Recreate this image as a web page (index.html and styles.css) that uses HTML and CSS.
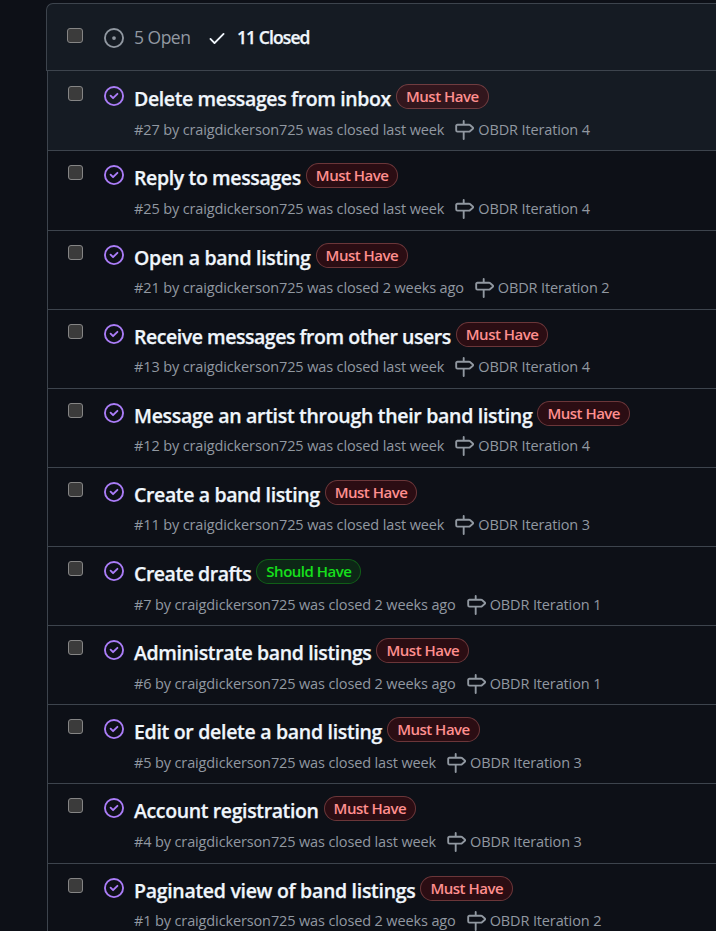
FILE: index.html
```html
<!DOCTYPE html>
<html lang="en">
<head>
<meta charset="utf-8">
<title>Issues</title>
<link rel="stylesheet" href="styles.css">
</head>
<body>
<svg class="sprite" aria-hidden="true">
  <symbol id="closed" viewBox="0 0 16 16"><path d="M11.28 6.78a.75.75 0 0 0-1.06-1.06L7.25 8.69 5.78 7.22a.75.75 0 0 0-1.06 1.06l2 2a.75.75 0 0 0 1.06 0l3.5-3.5Z"/><path d="M16 8A8 8 0 1 1 0 8a8 8 0 0 1 16 0Zm-1.5 0a6.5 6.5 0 1 0-13 0 6.5 6.5 0 0 0 13 0Z"/></symbol>
  <symbol id="open" viewBox="0 0 16 16"><path d="M8 9.5a1.5 1.5 0 1 0 0-3 1.5 1.5 0 0 0 0 3Z"/><path d="M8 0a8 8 0 1 1 0 16A8 8 0 0 1 8 0ZM1.5 8a6.5 6.5 0 1 0 13 0 6.5 6.5 0 0 0-13 0Z"/></symbol>
  <symbol id="check" viewBox="0 0 16 16"><path d="M13.78 4.22a.75.75 0 0 1 0 1.06l-7.25 7.25a.75.75 0 0 1-1.06 0L2.22 9.28a.75.75 0 0 1 1.06-1.06L6 10.94l6.72-6.72a.75.75 0 0 1 1.06 0Z"/></symbol>
  <symbol id="milestone" viewBox="0 0 16 16"><path d="M7.75 0a.75.75 0 0 1 .75.75V3h3.634c.414 0 .814.147 1.13.414l2.07 1.75a1.75 1.75 0 0 1 0 2.672l-2.07 1.75a1.75 1.75 0 0 1-1.13.414H8.5v5.25a.75.75 0 0 1-1.5 0V10H2.75A1.75 1.75 0 0 1 1 8.25v-3.5C1 3.784 1.784 3 2.75 3H7V.75A.75.75 0 0 1 7.75 0Zm4.384 8.5a.25.25 0 0 0 .161-.06l2.07-1.75a.248.248 0 0 0 0-.38l-2.07-1.75a.25.25 0 0 0-.161-.06H2.75a.25.25 0 0 0-.25.25v3.5c0 .138.112.25.25.25h9.384Z"/></symbol>
</svg>
<main class="box">
  <header class="head">
    <span class="checkbox"></span>
    <svg class="state"><use href="#open"/></svg>
    <span class="open-count">5 Open</span>
    <svg class="check"><use href="#check"/></svg>
    <span class="closed-count">11 Closed</span>
  </header>
  <div class="list">
    <div class="row active"><span class="checkbox"></span><svg class="state"><use href="#closed"/></svg><div class="body"><div class="line"><span class="title">Delete messages from inbox</span><span class="label must">Must Have</span></div><div class="meta"><span>#27 by craigdickerson725 was closed last week</span><svg><use href="#milestone"/></svg><span>OBDR Iteration 4</span></div></div></div>
    <div class="row"><span class="checkbox"></span><svg class="state"><use href="#closed"/></svg><div class="body"><div class="line"><span class="title">Reply to messages</span><span class="label must">Must Have</span></div><div class="meta"><span>#25 by craigdickerson725 was closed last week</span><svg><use href="#milestone"/></svg><span>OBDR Iteration 4</span></div></div></div>
    <div class="row"><span class="checkbox"></span><svg class="state"><use href="#closed"/></svg><div class="body"><div class="line"><span class="title loose">Open a band listing</span><span class="label must">Must Have</span></div><div class="meta"><span>#21 by craigdickerson725 was closed 2 weeks ago</span><svg><use href="#milestone"/></svg><span>OBDR Iteration 2</span></div></div></div>
    <div class="row"><span class="checkbox"></span><svg class="state"><use href="#closed"/></svg><div class="body"><div class="line"><span class="title tight">Receive messages from other users</span><span class="label must">Must Have</span></div><div class="meta"><span>#13 by craigdickerson725 was closed last week</span><svg><use href="#milestone"/></svg><span>OBDR Iteration 4</span></div></div></div>
    <div class="row"><span class="checkbox"></span><svg class="state"><use href="#closed"/></svg><div class="body"><div class="line"><span class="title loose">Message an artist through their band listing</span><span class="label must">Must Have</span></div><div class="meta"><span>#12 by craigdickerson725 was closed last week</span><svg><use href="#milestone"/></svg><span>OBDR Iteration 4</span></div></div></div>
    <div class="row"><span class="checkbox"></span><svg class="state"><use href="#closed"/></svg><div class="body"><div class="line"><span class="title">Create a band listing</span><span class="label must">Must Have</span></div><div class="meta"><span>#11 by craigdickerson725 was closed last week</span><svg><use href="#milestone"/></svg><span>OBDR Iteration 3</span></div></div></div>
    <div class="row"><span class="checkbox"></span><svg class="state"><use href="#closed"/></svg><div class="body"><div class="line"><span class="title tight">Create drafts</span><span class="label should">Should Have</span></div><div class="meta"><span>#7 by craigdickerson725 was closed 2 weeks ago</span><svg><use href="#milestone"/></svg><span>OBDR Iteration 1</span></div></div></div>
    <div class="row"><span class="checkbox"></span><svg class="state"><use href="#closed"/></svg><div class="body"><div class="line"><span class="title">Administrate band listings</span><span class="label must">Must Have</span></div><div class="meta"><span>#6 by craigdickerson725 was closed 2 weeks ago</span><svg><use href="#milestone"/></svg><span>OBDR Iteration 1</span></div></div></div>
    <div class="row"><span class="checkbox"></span><svg class="state"><use href="#closed"/></svg><div class="body"><div class="line"><span class="title loose">Edit or delete a band listing</span><span class="label must">Must Have</span></div><div class="meta"><span>#5 by craigdickerson725 was closed last week</span><svg><use href="#milestone"/></svg><span>OBDR Iteration 3</span></div></div></div>
    <div class="row"><span class="checkbox"></span><svg class="state"><use href="#closed"/></svg><div class="body"><div class="line"><span class="title">Account registration</span><span class="label must">Must Have</span></div><div class="meta"><span>#4 by craigdickerson725 was closed last week</span><svg><use href="#milestone"/></svg><span>OBDR Iteration 3</span></div></div></div>
    <div class="row"><span class="checkbox"></span><svg class="state"><use href="#closed"/></svg><div class="body"><div class="line"><span class="title loose">Paginated view of band listings</span><span class="label must">Must Have</span></div><div class="meta"><span>#1 by craigdickerson725 was closed 2 weeks ago</span><svg><use href="#milestone"/></svg><span>OBDR Iteration 2</span></div></div></div>
  </div>
</main>
</body>
</html>
```
FILE: styles.css
```css
* { box-sizing: border-box; }
html { height: 100%; overflow: hidden; background: #0d1017; }
body {
  margin: 0;
  height: 931px;
  overflow: hidden;
  background: #0d1017;
  color: #f0f6fc;
  font-family: "Segoe UI", "Open Sans", "Noto Sans", sans-serif;
}
.sprite { position: absolute; width: 0; height: 0; }
svg { fill: currentColor; flex: none; }
.box { padding: 3px 0 0 46px; }
.head {
  display: flex;
  align-items: center;
  height: 68px;
  padding-left: 20px;
  border: 1px solid #3d444d;
  border-right: 0;
  border-top-left-radius: 7px;
  background: #151b23;
  font-size: 17.5px;
}
.checkbox {
  flex: none;
  width: 15px;
  height: 15px;
  border: 1px solid #858585;
  border-radius: 3px;
  background: #3b3b3b;
}
.head .checkbox { width: 16px; margin-bottom: 4px; }
.state { width: 20px; height: 20px; color: #ab7df8; }
.head .state { margin-left: 21px; margin-top: 2px; color: #9198a1; }
.open-count { margin-left: 10px; color: #9198a1; width: 57px; letter-spacing: -0.5px; white-space: nowrap; }
.check { width: 20px; height: 20px; margin-left: 16px; margin-top: 2px; }
.closed-count { margin-left: 10px; font-weight: 600; letter-spacing: -0.9px; white-space: nowrap; -webkit-text-stroke: 0.25px; }
.list { margin-left: 1px; padding-top: 0.3px; border-left: 1px solid #3d444d; }
.row { display: flex; height: 79.14px; padding-left: 20px; white-space: nowrap; }
.row + .row { border-top: 1px solid #3d444d; }
.row.active { background: #151b23; }
.row .checkbox { margin-top: 15px; }
.row .state { margin: 15px 0 0 21px; }
.row + .row .checkbox { margin-top: 14px; }
.row + .row .state { margin-top: 14px; }
.body { margin-left: 10px; }
.line { display: flex; height: 29px; margin-top: 13px; }
.row + .row .line { margin-top: 12px; }
.title { font-size: 19.5px; font-weight: 600; line-height: 30px; letter-spacing: -0.37px; -webkit-text-stroke: 0.25px; }
.title.loose { letter-spacing: -0.3px; }
.title.tight { letter-spacing: -0.47px; }
.label {
  height: 25px;
  margin-left: 5px;
  padding: 0 9px;
  border: 1px solid;
  border-radius: 13px;
  font-size: 15px;
  font-weight: 600;
  line-height: 22px;
  letter-spacing: -0.5px;
}
.must { color: #ff8f8f; background: rgba(182, 2, 5, 0.18); border-color: rgba(255, 148, 146, 0.3); }
.should { color: #16e01c; background: rgba(14, 138, 22, 0.18); border-color: rgba(22, 224, 28, 0.3); }
.meta { display: flex; align-items: center; height: 22px; margin-top: 5px; color: #9198a1; font-size: 14.5px; letter-spacing: -0.13px; }
.meta svg { width: 20px; height: 20px; margin: 1px 4px 0 10px; }
```
